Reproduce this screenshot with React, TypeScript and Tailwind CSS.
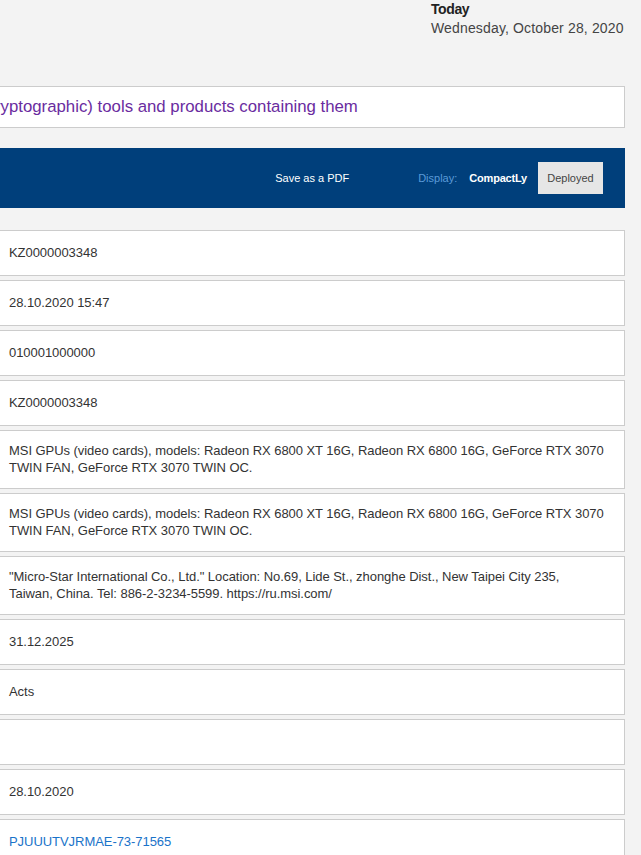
import React from 'react';

type Row = { lines: string[]; link?: boolean };

const rows: Row[] = [
  { lines: ['KZ0000003348'] },
  { lines: ['28.10.2020 15:47'] },
  { lines: ['010001000000'] },
  { lines: ['KZ0000003348'] },
  {
    lines: [
      'MSI GPUs (video cards), models: Radeon RX 6800 XT 16G, Radeon RX 6800 16G, GeForce RTX 3070',
      'TWIN FAN, GeForce RTX 3070 TWIN OC.',
    ],
  },
  {
    lines: [
      'MSI GPUs (video cards), models: Radeon RX 6800 XT 16G, Radeon RX 6800 16G, GeForce RTX 3070',
      'TWIN FAN, GeForce RTX 3070 TWIN OC.',
    ],
  },
  {
    lines: [
      '"Micro-Star International Co., Ltd." Location: No.69, Lide St., zhonghe Dist., New Taipei City 235,',
      'Taiwan, China. Tel: 886-2-3234-5599. https://ru.msi.com/',
    ],
  },
  { lines: ['31.12.2025'] },
  { lines: ['Acts'] },
  { lines: [] },
  { lines: ['28.10.2020'] },
  { lines: ['PJUUUTVJRMAE-73-71565'], link: true },
];

export default function App() {
  return (
    <div className="h-[855px] w-[641px] overflow-hidden bg-[#f3f3f3] font-['Liberation_Sans',Arial,sans-serif] text-[#333]">
      <header className="ml-[431px] text-[14px] leading-[18px]">
        <div className="font-bold tracking-[-0.4px] text-[#222]">Today</div>
        <div className="mt-[1px] tracking-[0.15px] text-[#444]">Wednesday, October 28, 2020</div>
      </header>

      <main className="ml-[-1px] mr-[16px] mt-[49px] flex flex-col">
        <div className="flex h-[42px] items-center overflow-hidden whitespace-nowrap border border-[#ccc] bg-white">
          <span className="ml-[-19px] text-[16.8px] text-[#6a2ca0]">
            (cryptographic) tools and products containing them
          </span>
        </div>

        <div className="mt-[20px] flex h-[60px] items-center bg-[#003f7b] pr-[22px] text-[11px]">
          <span className="ml-auto text-white">Save as a PDF</span>
          <span className="ml-[69px] text-[#5b9ad8]">Display:</span>
          <span className="ml-[12px] font-semibold tracking-[-0.2px] text-white">CompactLy</span>
          <button
            type="button"
            className="ml-[11px] flex h-[32px] w-[65px] items-center justify-center bg-[#e6e6e6] text-[11px] text-[#444]"
          >
            Deployed
          </button>
        </div>

        <div className="mt-[22px] flex flex-col gap-[4px]">
          {rows.map((row, i) => (
            <div
              key={i}
              className={`flex min-h-[46px] flex-col justify-center border border-[#ccc] bg-white py-[12px] pl-[9px] pr-[12px] text-[13px] leading-[16.5px] tracking-[-0.05px] ${
                row.link ? 'text-[#1a73c9]' : 'text-[#333]'
              }`}
            >
              {row.lines.map((l, j) => (
                <div key={j} className="whitespace-nowrap">
                  {l}
                </div>
              ))}
            </div>
          ))}
        </div>
      </main>
    </div>
  );
}
